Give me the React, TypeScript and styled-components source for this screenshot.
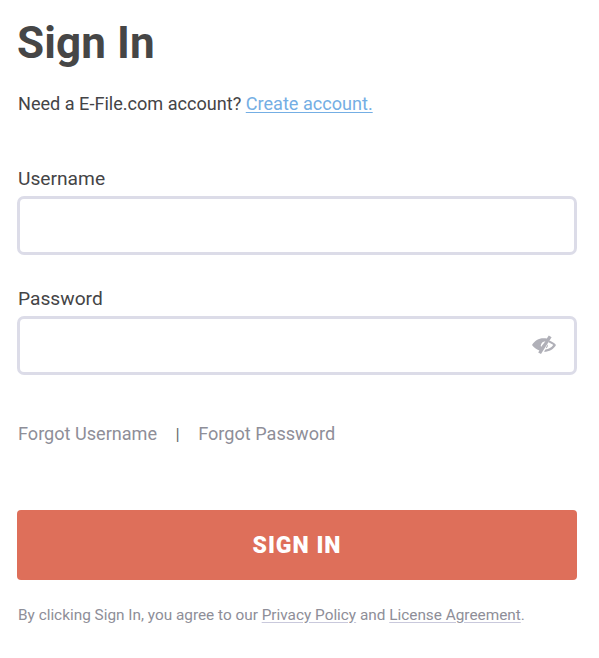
import React from "react";
import styled, { createGlobalStyle } from "styled-components";

const GlobalStyle = createGlobalStyle`
  html, body {
    margin: 0;
    padding: 0;
    background: #fff;
  }
  * { box-sizing: border-box; }
`;

const Page = styled.main`
  width: 599px;
  height: 658px;
  padding: 17px 22px 0 17px;
  font-family: Roboto, "Liberation Sans", sans-serif;
  color: #444446;
`;

const Title = styled.h1`
  margin: 0;
  font-size: 44px;
  line-height: 52px;
  font-weight: 700;
  letter-spacing: 0.1px;
  color: #464646;
`;

const Intro = styled.p`
  margin: 23px 0 0;
  padding-left: 1px;
  font-size: 18.1px;
  line-height: 24px;
`;

const BlueLink = styled.a`
  color: #74aee4;
  text-decoration: underline;
  text-underline-offset: 2px;
  text-decoration-thickness: 1px;
`;

const Form = styled.form`
  margin-top: 51px;
  display: flex;
  flex-direction: column;
  gap: 32px;
`;

const Field = styled.div`
  display: flex;
  flex-direction: column;
  gap: 5px;
`;

const Label = styled.label`
  padding-left: 1px;
  font-size: 19.2px;
  line-height: 24px;
`;

const InputWrap = styled.div`
  position: relative;
`;

const Input = styled.input`
  display: block;
  width: 100%;
  height: 59px;
  border: 3px solid #dcdce8;
  border-radius: 7px;
  background: #fff;
  outline: none;
`;

const EyeButton = styled.span`
  position: absolute;
  right: 20px;
  top: 18px;
  width: 26px;
  height: 22px;
`;

const Recovery = styled.div`
  margin-top: 47px;
  padding-left: 1px;
  display: flex;
  align-items: center;
  font-size: 18.1px;
  line-height: 24px;
  color: #8e8e98;
`;

const Divider = styled.span`
  margin: 0 18.5px;
  color: #6b6b70;
  font-size: 17px;
`;

const SubmitButton = styled.button`
  margin-top: 64px;
  width: 100%;
  height: 70px;
  border: none;
  border-radius: 4px;
  background: #de6f5a;
  color: #fff;
  font-family: inherit;
  font-size: 23px;
  font-weight: 900;
  letter-spacing: 1px;
`;

const Legal = styled.p`
  margin: 24px 0 0;
  padding-left: 1px;
  font-size: 15.35px;
  line-height: 22px;
  color: #8e8e98;
`;

const LegalLink = styled.a`
  color: inherit;
  text-decoration: underline;
  text-decoration-color: #c9c9dc;
  text-underline-offset: 2px;
`;

const EyeOffIcon = () => (
  <svg width="26" height="22" viewBox="0 0 26 22" fill="none">
    <path
      d="M1 11C3.6 6.8 7.6 4.2 12.4 4.2 13.6 4.2 14.8 4.4 15.8 4.6L17.8 1.6 20.6 3.2 10 20 7.2 18.4 8.4 16.4C5.4 15.2 2.8 13.4 1 11Z"
      fill="#b0b0b8"
    />
    <path
      d="M18.4 6.6C21.2 7.8 23.4 9.2 25 11 22.8 15 18.4 17.8 13 17.8L14.4 15.4C17.6 15.2 20.6 13.6 22.2 11 21 10 19.8 9.2 17.4 8.2Z"
      fill="#b0b0b8"
    />
    <path d="M16.8 10.2C17.2 12 16.4 13.4 15.4 14.2L14.8 13.8Z" fill="#b0b0b8" />
    <path d="M14.4 7.2C11.8 7.4 10 9 9.8 11.6L10 13Z" fill="#fff" />
  </svg>
);

export default function App() {
  return (
    <Page>
      <GlobalStyle />
      <Title>Sign In</Title>
      <Intro>
        Need a E-File.com account? <BlueLink href="#">Create account.</BlueLink>
      </Intro>
      <Form onSubmit={(e) => e.preventDefault()}>
        <Field>
          <Label htmlFor="username">Username</Label>
          <Input id="username" type="text" />
        </Field>
        <Field>
          <Label htmlFor="password">Password</Label>
          <InputWrap>
            <Input id="password" type="password" />
            <EyeButton>
              <EyeOffIcon />
            </EyeButton>
          </InputWrap>
        </Field>
      </Form>
      <Recovery>
        <span>Forgot Username</span>
        <Divider>|</Divider>
        <span>Forgot Password</span>
      </Recovery>
      <SubmitButton type="button">SIGN IN</SubmitButton>
      <Legal>
        By clicking Sign In, you agree to our <LegalLink href="#">Privacy Policy</LegalLink> and{" "}
        <LegalLink href="#">License Agreement</LegalLink>.
      </Legal>
    </Page>
  );
}
